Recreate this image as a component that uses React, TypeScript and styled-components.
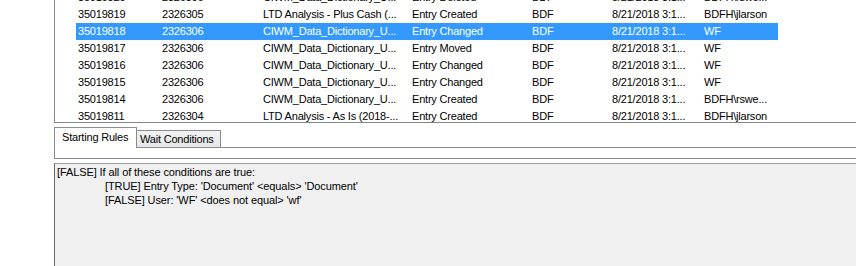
import React from "react";
import styled, { createGlobalStyle } from "styled-components";

const Global = createGlobalStyle`
  html, body { margin: 0; padding: 0; background: #fff; }
  body {
    font-family: "Liberation Sans", Arial, sans-serif;
    font-size: 11px;
    color: #000;
  }
`;

const Window = styled.div`
  width: 856px;
  height: 266px;
  overflow: hidden;
  display: flex;
  flex-direction: column;
  padding-left: 54px;
  box-sizing: border-box;
  background: #fff;
`;

const ListView = styled.div`
  flex: none;
  height: 123px;
  box-sizing: border-box;
  border-left: 1px solid #828790;
  border-bottom: 1px solid #828790;
  overflow: hidden;
  background: #fff;
`;

const Rows = styled.div`
  margin-top: -11px;
  margin-left: 21px;
`;

const Row = styled.div<{ $selected?: boolean }>`
  display: grid;
  grid-template-columns: 84px 101px 149px 120px 80px 92px 76px;
  width: 702px;
  height: 17px;
  line-height: 17px;
  background: ${(p) => (p.$selected ? "#3399ff" : "transparent")};
  color: ${(p) => (p.$selected ? "#fff" : "#000")};
`;

const Cell = styled.div`
  padding-left: 2px;
  white-space: nowrap;
  overflow: hidden;
  letter-spacing: -0.2px;
`;

const TabStrip = styled.div`
  flex: none;
  margin-top: 4px;
  height: 21px;
  display: flex;
  align-items: flex-end;
`;

const Tab = styled.div<{ $active?: boolean }>`
  box-sizing: border-box;
  height: ${(p) => (p.$active ? "21px" : "18px")};
  width: ${(p) => (p.$active ? "83px" : "84px")};
  padding-left: ${(p) => (p.$active ? "7px" : "3px")};
  border-top: 1px solid #898c95;
  border-right: 1px solid #898c95;
  border-left: ${(p) => (p.$active ? "1px solid #898c95" : "none")};
  border-bottom: ${(p) => (p.$active ? "none" : "1px solid #898c95")};
  background: ${(p) => (p.$active ? "#fff" : "linear-gradient(#f2f2f2, #e6e6e6)")};
  line-height: ${(p) => (p.$active ? "18px" : "16px")};
  white-space: nowrap;
  letter-spacing: -0.2px;
`;

const TabFill = styled.div`
  flex: 1;
  height: 1px;
  background: #898c95;
`;

const TabPanel = styled.div`
  flex: none;
  height: 11px;
  box-sizing: border-box;
  border-left: 1px solid #898c95;
  border-bottom: 1px solid #898c95;
  background: #fff;
`;

const RulesBox = styled.div`
  flex: 1;
  margin-top: 4px;
  border-top: 1px solid #a0a0a0;
  border-left: 1px solid #6a6a6a;
  background: #f0f0f0;
  padding: 1px 0 0 2px;
  line-height: 14px;
  letter-spacing: -0.1px;
`;

const RuleLine = styled.div<{ $indent?: boolean }>`
  padding-left: ${(p) => (p.$indent ? "48px" : "0")};
  white-space: pre;
`;

const CIWM = "CIWM_Data_Dictionary_U...";
const DT = "8/21/2018 3:1...";

const rows: string[][] = [
  ["35019820", "2326306", CIWM, "Entry Deleted", "BDF", DT, "BDFH\\rswe..."],
  ["35019819", "2326305", "LTD Analysis - Plus Cash (...", "Entry Created", "BDF", DT, "BDFH\\jlarson"],
  ["35019818", "2326306", CIWM, "Entry Changed", "BDF", DT, "WF"],
  ["35019817", "2326306", CIWM, "Entry Moved", "BDF", DT, "WF"],
  ["35019816", "2326306", CIWM, "Entry Changed", "BDF", DT, "WF"],
  ["35019815", "2326306", CIWM, "Entry Changed", "BDF", DT, "WF"],
  ["35019814", "2326306", CIWM, "Entry Created", "BDF", DT, "BDFH\\rswe..."],
  ["35019811", "2326304", "LTD Analysis - As Is (2018-...", "Entry Created", "BDF", DT, "BDFH\\jlarson"],
];

export default function App() {
  return (
    <>
      <Global />
      <Window>
        <ListView>
          <Rows>
            {rows.map((r, i) => (
              <Row key={i} $selected={i === 2}>
                {r.map((c, j) => (
                  <Cell key={j}>{c}</Cell>
                ))}
              </Row>
            ))}
          </Rows>
        </ListView>
        <TabStrip>
          <Tab $active>Starting Rules</Tab>
          <Tab>Wait Conditions</Tab>
          <TabFill />
        </TabStrip>
        <TabPanel />
        <RulesBox>
          <RuleLine>[FALSE] If all of these conditions are true:</RuleLine>
          <RuleLine $indent>[TRUE] Entry Type: 'Document' &lt;equals&gt; 'Document'</RuleLine>
          <RuleLine $indent>[FALSE] User: 'WF' &lt;does not equal&gt; 'wf'</RuleLine>
        </RulesBox>
      </Window>
    </>
  );
}
